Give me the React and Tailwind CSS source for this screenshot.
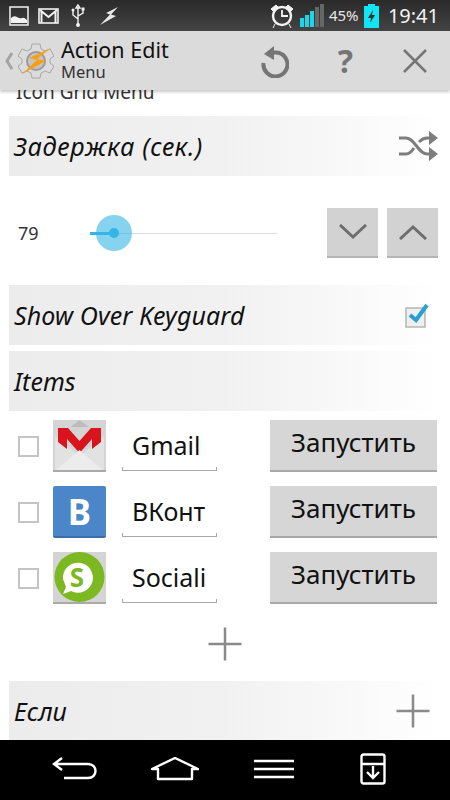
import React from 'react';

const SectionBar = ({ title, className = '', titleClass = '', children }) => (
  <div className={`mx-[9px] flex h-[60px] items-center justify-between bg-gradient-to-r from-[#ececec] via-[#f1f1f1] to-[#ffffff] pl-[5px] ${className}`}>
    <span className={`text-[25px] italic leading-none text-[#111] ${titleClass}`}>{title}</span>
    {children}
  </div>
);

const Plus = ({ className = '' }) => (
  <svg width="34" height="34" viewBox="0 0 34 34" className={className}>
    <path d="M0.5 17h33M17 0.5v33" stroke="#8a8a8a" strokeWidth="2.5" fill="none" />
  </svg>
);

const StatusIcons = () => (
  <div className="flex items-center">
    <svg width="20" height="20" viewBox="0 0 20 20" className="ml-[9px]">
      <rect x="1" y="1" width="18" height="18" fill="none" stroke="#f2f2f2" strokeWidth="1.5" />
      <path d="M2 17v-5q3-3 6-1t5 1 5 2v3z" fill="#f2f2f2" />
    </svg>
    <svg width="21" height="16" viewBox="0 0 21 16" className="ml-[9px]">
      <rect x="1" y="1" width="19" height="14" fill="none" stroke="#f2f2f2" strokeWidth="1.6" />
      <path d="M2 2l8.500 7L19 2M3.500 3v12M17.500 3v12" fill="none" stroke="#f2f2f2" strokeWidth="2" />
    </svg>
    <svg width="14" height="24" viewBox="0 0 14 24" className="ml-[12px]">
      <path d="M7 1l-2 3h4zM7 4v17M2 7v4l5 4M12 6v3l-5 3" fill="none" stroke="#f2f2f2" strokeWidth="1.4" />
      <circle cx="7" cy="21" r="2" fill="#f2f2f2" />
      <circle cx="2" cy="6" r="1.500" fill="#f2f2f2" />
      <rect x="10.500" y="3.500" width="3" height="3" fill="#f2f2f2" />
    </svg>
    <svg width="20" height="20" viewBox="0 0 20 20" className="ml-[14px]">
      <path d="M19 1L7 7l4 1.500L1 19l16-9-5-1.500z" fill="#e8e8e8" />
    </svg>
  </div>
);

const StatusRight = () => (
  <div className="flex items-center">
    <svg width="24" height="26" viewBox="0 0 24 26">
      <circle cx="12" cy="13" r="9" fill="none" stroke="#f4f4f4" strokeWidth="2.4" />
      <path d="M12 7v6h6" fill="none" stroke="#f4f4f4" strokeWidth="1.8" />
      <path d="M1 6l5-4 2 2-5 4zM23 6l-5-4-2 2 5 4zM5 21l-2 4M19 21l2 4" fill="#f4f4f4" stroke="#f4f4f4" strokeWidth="1" />
    </svg>
    <div className="ml-[6px] flex h-[23px] items-end gap-[1px]">
      <div className="h-[9px] w-[4px] bg-[#19d7ea]" />
      <div className="h-[12px] w-[4px] bg-[#19d7ea]" />
      <div className="h-[16px] w-[4px] bg-[#19d7ea]" />
      <div className="h-[20px] w-[4px] bg-[#666]" />
      <div className="h-[23px] w-[4px] bg-[#666]" />
    </div>
    <span className="ml-[5px] w-[30px] text-[15px] leading-none text-[#e8e8e8]">45%</span>
    <svg width="15" height="24" viewBox="0 0 15 24" className="ml-[5px]">
      <path d="M4 0h7v2h4v22H0V2h4z" fill="#12e6f5" />
      <path d="M9 6L4 14h3l-1 5 5-8H8z" fill="#333" />
    </svg>
    <span className="ml-[9px] text-[20px] leading-none text-[#f2f2f2]">19:41</span>
  </div>
);

const TaskerLogo = () => (
  <svg width="36" height="36" viewBox="0 0 36 36">
    <path
      d="M14 1h8l1 5 4 2 5-2 4 7-4 3v4l4 3-4 7-5-2-4 2-1 5h-8l-1-5-4-2-5 2-4-7 4-3v-4l-4-3 4-7 5 2 4-2z"
      fill="#dcdcdc"
      stroke="#a8a8a8"
      strokeWidth="1"
    />
    <circle cx="18" cy="18" r="9" fill="#c4c4c4" stroke="#9a9a9a" strokeWidth="2" />
    <path d="M33 5L11 15l8 2L4 31l24-13-9-2z" fill="#fa9f14" />
  </svg>
);

const ActionBar = () => (
  <header className="relative z-10 flex h-[59px] shrink-0 items-center bg-[#dbdbdb] shadow-[0_2px_3px_rgba(0,0,0,0.22)]">
    <svg width="10" height="18" viewBox="0 0 10 18" className="ml-[4px]">
      <path d="M8 1L3 9l5 8" fill="none" stroke="#a3a3a3" strokeWidth="3" />
    </svg>
    <div className="ml-[4px]"><TaskerLogo /></div>
    <div className="ml-[7px] flex flex-col pb-[2px]">
      <span className="text-[21.5px] leading-[25px] text-[#111]">Action Edit</span>
      <span className="text-[16.5px] leading-[20px] text-[#333]">Menu</span>
    </div>
    <div className="ml-auto flex items-center">
      <svg width="30" height="34" viewBox="0 0 30 34" className="mr-[49px]">
        <path d="M9 11a12 12 0 1 1-4.500 8" fill="none" stroke="#757575" strokeWidth="4" />
        <path d="M15 2L5 10l10 6z" fill="#757575" />
      </svg>
      <span className="mr-[50px] text-[32px] font-bold leading-none text-[#757575]">?</span>
      <svg width="24" height="24" viewBox="0 0 24 24" className="mr-[23px]">
        <path d="M1 1l22 22M23 1L1 23" stroke="#757575" strokeWidth="2.5" fill="none" />
      </svg>
    </div>
  </header>
);

const Chevron = ({ up }) => (
  <button className="flex h-[50px] w-[51px] items-center justify-center border-b-2 border-[#b5b5b5] bg-[#d2d2d2]">
    <svg width="28" height="16" viewBox="0 0 28 16">
      <path d={up ? 'M1 15L14 3l13 12' : 'M1 1l13 12L27 1'} fill="none" stroke="#6d6d6d" strokeWidth="3" />
    </svg>
  </button>
);

const GmailIcon = () => (
  <div className="h-[52px] w-[53px] border-b-2 border-[#aaa] bg-[#d4d4d4]">
    <svg width="53" height="50" viewBox="0 0 53 50">
      <path d="M26.500 0l9 7h-18z" fill="#bcbcbc" />
      <path d="M2 16l24.500 20L51 16v34H2z" fill="#e2e2e2" />
      <path d="M5 8h10l11.500 13L38 8h10v14l-9 7V19L26.500 33 14 19v10l-9-7z" fill="#d8141c" />
      <path d="M3 50l23.500-20L50 50z" fill="#ececec" />
    </svg>
  </div>
);

const VkIcon = () => (
  <div className="flex h-[52px] w-[53px] items-center justify-center rounded-[2px] border-b-2 border-[#3c6ea5] bg-[#4a86c8]">
    <span className="text-[35px] font-bold leading-none text-white">B</span>
  </div>
);

const SocialIcon = () => (
  <div className="h-[52px] w-[53px] border-b-2 border-[#aaa] bg-[#d4d4d4]">
    <svg width="53" height="50" viewBox="0 0 53 50">
      <circle cx="26.500" cy="25" r="25" fill="#7cb822" />
      <path d="M10 27a15 15 0 1 1 8 12l-8 3 3-7z" fill="#fff" />
      <text x="24" y="35" textAnchor="middle" fontSize="26" fontWeight="700" fill="#7cb822">S</text>
    </svg>
  </div>
);

const items = [
  { name: 'Gmail', icon: <GmailIcon /> },
  { name: 'ВКонт', icon: <VkIcon /> },
  { name: 'Sociali', icon: <SocialIcon /> },
];

const ItemRow = ({ name, icon }) => (
  <div className="flex h-[52px] items-center pl-[18px]">
    <div className="h-[21px] w-[21px] border-2 border-[#c4c4c4]" />
    <div className="ml-[14px]">{icon}</div>
    <div className="relative ml-[16px] h-[52px] w-[95px] pl-[10px] pr-[9px]">
      <div className="flex h-[50px] items-center overflow-hidden">
        <span className="whitespace-nowrap text-[25px] leading-none text-[#111]">{name}</span>
      </div>
      {/* underline with small end ticks, like the holo edit text */}
      <div className="absolute bottom-[1px] left-0 h-[4px] w-full border-x border-b border-[#a8a8a8]" />
    </div>
    <button className="ml-[53px] h-[52px] w-[167px] border-b-2 border-[#a8a8a8] bg-[#d6d6d6] pb-[6px] text-[26px] text-[#111]">
      Запустить
    </button>
  </div>
);

export default function App() {
  return (
    <div
      className="flex h-[800px] w-[450px] flex-col overflow-hidden bg-white"
      style={{ fontFamily: '"Noto Sans", "Open Sans", sans-serif' }}
    >
      <div className="flex h-[31px] shrink-0 items-center justify-between bg-gradient-to-b from-[#2a2a2a] to-[#444] pr-[11px]">
        <StatusIcons />
        <StatusRight />
      </div>
      <ActionBar />

      <main className="flex-1 overflow-hidden">
        <div className="mt-[-10px] pl-[16px] text-[19px] leading-[25px] text-[#333]">Icon Grid Menu</div>
        <div className="h-[11px]" />
        <SectionBar title="Задержка (сек.)" titleClass="tracking-[0.7px]" className="pr-[3px]">
          <svg width="40" height="30" viewBox="0 0 40 30">
            <path d="M1 7h7c9 0 12 16 21 16h4M1 23h7c4 0 6-3 8-6M21 11c2-2 4-4 8-4h4" fill="none" stroke="#7d7d7d" strokeWidth="3" />
            <path d="M31 0l9 7-9 7zM31 16l9 7-9 7z" fill="#7d7d7d" />
          </svg>
        </SectionBar>

        <div className="flex h-[109px] items-center pl-[18px] pr-[12px] pt-[5px]">
          <span className="w-[72px] text-[18px] leading-none text-[#333]">79</span>
          <div className="relative h-[1px] w-[187px] bg-[#dcdcdc]">
            <div className="h-[3px] w-[24px] -translate-y-px bg-[#33b5e5]" />
            <div className="absolute left-[6px] top-[-18px] h-[36px] w-[36px] rounded-full bg-[#33b5e5]/60" />
            <div className="absolute left-[19px] top-[-5px] h-[10px] w-[10px] rounded-full bg-[#33b5e5]" />
          </div>
          <div className="ml-auto flex gap-[9px]">
            <Chevron />
            <Chevron up />
          </div>
        </div>

        <SectionBar title="Show Over Keyguard" titleClass="tracking-[0.1px]" className="pr-[11px]">
          <svg width="26" height="26" viewBox="0 0 26 26">
            <rect x="2" y="6" width="19" height="19" fill="#efefef" stroke="#b5b5b5" strokeWidth="1.5" />
            <path d="M6 13l6 5L23 3" fill="none" stroke="#2a9fd0" strokeWidth="4" />
          </svg>
        </SectionBar>

        <SectionBar title="Items" className="mt-[6px]" />

        <div className="mt-[9px] flex flex-col gap-[14px]">
          {items.map((item) => (
            <ItemRow key={item.name} name={item.name} icon={item.icon} />
          ))}
        </div>

        <div className="flex h-[77px] items-center justify-center pt-[3px]">
          <Plus />
        </div>

        <SectionBar title="Если" className="pr-[11px]">
          <Plus />
        </SectionBar>
      </main>

      <nav className="flex h-[60px] shrink-0 items-center bg-black pb-[2px]">
        <svg width="46" height="26" viewBox="0 0 46 26" className="ml-[52px]">
          <path d="M10 2L2 8l8 6M2 8h34c10 0 10 14 0 14H12" fill="none" stroke="#fff" strokeWidth="2.4" />
        </svg>
        <svg width="48" height="24" viewBox="0 0 48 24" className="ml-[53px]">
          <path d="M1 12L24 1l23 11h-6v10H7V12z" fill="none" stroke="#fff" strokeWidth="2.4" strokeLinejoin="round" />
        </svg>
        <svg width="40" height="20" viewBox="0 0 40 20" className="ml-[55px]">
          <path d="M0 2h40M0 10h40M0 18h40" stroke="#fff" strokeWidth="2.4" />
        </svg>
        <svg width="26" height="32" viewBox="0 0 26 32" className="ml-[66px]">
          <rect x="1.500" y="1.500" width="23" height="29" rx="2" fill="none" stroke="#fff" strokeWidth="2.4" />
          <path d="M2 11h22M13 13v12M7 19l6 6 6-6" fill="none" stroke="#fff" strokeWidth="2.4" />
        </svg>
      </nav>
    </div>
  );
}
